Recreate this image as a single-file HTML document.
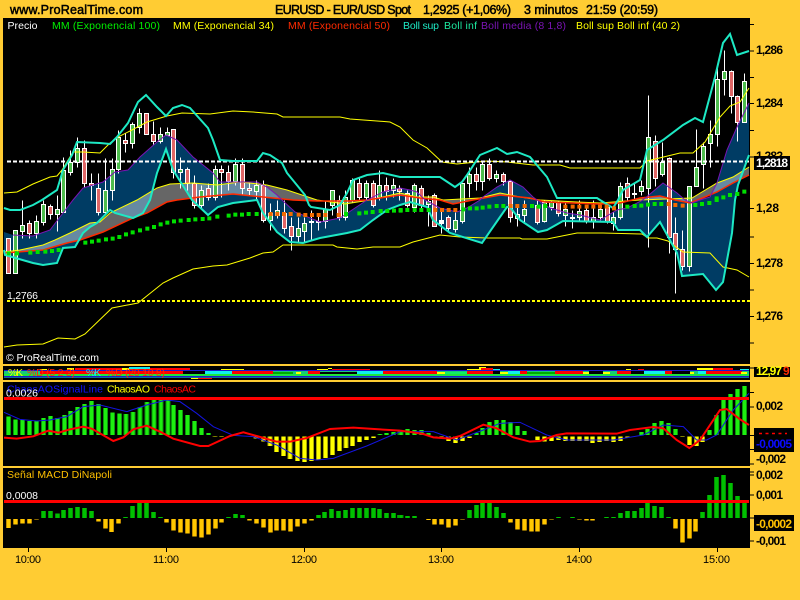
<!DOCTYPE html>
<html><head><meta charset="utf-8"><title>EURUSD</title>
<style>
html,body{margin:0;padding:0;background:#ffcc33;width:800px;height:600px;overflow:hidden}
svg{display:block;font-family:"Liberation Sans",sans-serif}
.t{font-size:12.5px;fill:#000;stroke:#000;stroke-width:.5}
.l{font-size:10.5px}
.a{font-size:12px;font-weight:bold;fill:#000}
.h{font-size:11px;fill:#000}
.n{fill:none}
</style></head><body>
<svg width="800" height="600" viewBox="0 0 800 600" xmlns="http://www.w3.org/2000/svg">
<defs>
<path id="ag" d="M25 225V170M46 225V178M67 225V180M88 225V183M109 225V183M130 225V174M151 225V168M172 225V174M193 225V165M212 225V153M233 225V141M254 225V132M275 225V123M296 225V132M317 225V144M338 225V158M359 225V160M378 225V162M399 225V156M420 225V141M441 225V126M462 225V120M483 225V120M504 225V120M520 225V135M541 225V150M562 225V165M583 225V183M604 225V204M625 225V219"/>
<path id="ay" d="M645 229V231M665 229V231M768 229V236M790 229V245M810 229V258M830 229V276M850 229V288M870 229V297M892 229V303M913 229V306M934 229V303M955 229V300M976 229V294M997 229V285M1018 229V273M1038 229V264M1058 229V258M1078 229V246M1100 229V240M1120 229V234"/>
<path id="ag3" d="M1140 225V222M1160 225V219M1180 225V216M1200 225V213"/>
<path id="bg" d="M3 225V216M22 225V207M43 225V210M64 225V210M85 225V219M229 225V219M247 225V204M268 225V186M289 225V180M310 225V180M331 225V186M352 225V198M373 225V213M724 225V216M743 225V207M763 225V189M784 225V183M805 225V189M826 225V207M929 225V210M950 225V165M971 225V120M992 225V102M1012 225V87M1033 225V78"/>
<path id="by" d="M105 229V231M125 229V231M145 229V243M166 229V249M187 229V243M208 229V234M412 229V240M433 229V245M454 229V243M475 229V240M496 229V243M517 229V243M538 229V243M559 229V243M578 229V249M599 229V246M620 229V243M640 229V246M661 229V243M682 229V233M847 229V231M868 229V255M889 229V258M908 229V246"/>
<path id="cg" d="M130 174V153M151 174V153M172 174V160M190 174V150M211 174V144M232 174V141M253 174V144M274 174V153M376 174V171M397 174V138M418 174V129M439 174V129M460 174V156M481 174V171M685 174V171M706 174V162M727 174V165M955 174V165M973 174V156M994 174V147M1015 174V153M1036 174V150M1057 174V144M1078 174V144M1099 174V144M1120 174V144M1138 174V147M1159 174V159M1180 174V159M1198 174V165"/>
<path id="co" d="M25 177V204M46 177V194M67 177V191M88 177V191M109 177V178M295 177V185M316 177V206M334 177V216M355 177V191M500 177V188M520 177V212M541 177V218M562 177V221M583 177V230M604 177V233M625 177V224M646 177V206M664 177V188M748 177V182M769 177V191M790 177V203M811 177V218M829 177V212M850 177V212M871 177V215M892 177V200M913 177V191M934 177V182"/>
<path id="dg" d="M3 174V165M22 174V168M43 174V168M208 174V150M229 174V135M247 174V129M268 174V129M289 174V141M310 174V159M475 174V171M517 174V171M619 174V171M640 174V171M661 174V159M682 174V153M703 174V153M724 174V144M743 174V129M764 174V138M785 174V141M806 174V171M908 174V156M929 174V105M950 174V51M971 174V45M992 174V69M1013 174V108M1034 174V129"/>
<path id="do" d="M85 177V180M103 177V194M124 177V194M145 177V203M166 177V197M187 177V178M331 177V188M352 177V209M373 177V212M394 177V215M412 177V215M433 177V194M454 177V178M538 177V179M559 177V181M577 177V181M827 177V206M848 177V248M869 177V236M887 177V215"/>
</defs>

<!-- panels -->
<rect x="3" y="18" width="747" height="346" fill="#000"/>
<rect x="3" y="366" width="747" height="14" fill="#000"/>
<rect x="3" y="382" width="747" height="84" fill="#000"/>
<rect x="3" y="468" width="747" height="80" fill="#000"/>

<!-- clouds -->
<polygon fill="#003c64" points="4,232 13,235 33,236 50,230 63,213 73,200 83,188 103,182 115,172 128,170 140,157 157,142 166,135 177,140 193,157 213,173 220,182 240,182 257,182 267,187 277,195 282,200 295,212 320,222 340,218 367,200 383,192 400,188 410,190 417,192 425,200 440,208 457,212 467,208 480,200 483,197 497,187 510,180 523,187 533,197 537,200 550,208 557,210 567,213 580,215 600,220 617,210 627,208 643,200 663,183 677,193 685,200 692,203 700,200 710,197 717,183 727,150 737,127 749,103 749,155 738,185 735,200 732,233 723,282 716,290 703,274 682,276 677,253 660,222 647,237 640,230 618,230 613,222 563,221 547,230 538,232 520,220 510,207 507,207 500,217 482,243 450,233 433,220 427,207 410,202 400,205 387,210 373,220 360,230 347,233 320,238 303,243 290,242 277,232 263,213 257,200 233,203 218,207 208,215 192,200 173,170 166,149 157,173 150,200 143,213 133,218 115,213 110,210 97,223 90,227 83,233 75,247 63,248 57,263 43,265 33,263 12,257 5,255 4,250"/>
<polygon fill="#666" style="mix-blend-mode:screen" points="4,252 20,250 43,245 55,240 70,233 90,223 100,222 110,213 137,200 157,188 170,184 193,183 217,185 240,182 267,185 287,190 317,200 345,204 370,200 400,193 417,197 433,197 443,200 480,198 500,193 520,197 540,200 577,202 600,203 640,200 692,198 717,183 733,177 749,167 749,175 733,183 717,192 700,199 690,203 675,200 660,196 640,198 620,203 600,204 545,202 530,198 500,195 473,200 453,204 440,200 420,198 400,195 367,200 347,201 317,201 293,200 263,197 233,194 200,197 177,200 167,202 147,213 133,218 103,232 80,240 67,243 43,250 4,253"/>

<!-- candles -->
<g transform="translate(.5,.5)" stroke-width="1">
<path class="n" stroke="#fff" d="M22 200V238M29 220V238M36 215V238M43 200V225M50 204V219M57 195V231M63 157V212M70 150V175M77 137V167M84 140V187M91 173V200M98 173V215M105 158V215M112 158V200M118 130V173M125 133V152M132 122V148M139 108V133M146 113V134M153 121V145M160 127V143M167 127V135M173 129V178M180 157V188M187 167V190M194 175V208M201 185V209M208 183V200M215 165V200M221 165V197M228 165V190M235 158V185M242 158V195M249 182V195M256 180V200M263 180V222M270 203V230M277 200V218M284 200V233M291 217V250M298 217V243M304 217V242M311 210V240M318 213V230M325 200V228M332 193V215M339 195V220M345 190V220M352 178V202M359 178V200M366 180V200M373 180V207M379 170V200M386 177V200M393 178V197M399 185V200M407 190V207M414 183V212M421 185V208M428 195V226M434 193V226M441 208V233M448 215V230M455 212V232M462 183V223M469 167V197M476 167V190M482 160V190M489 158V180M496 170V182M503 172V185M510 180V222M517 207V226M524 200V222M537 200V224M544 200V222M551 200V210M558 200V216M565 202V226M572 210V228M579 200V220M586 205V223M593 200V228M600 203V220M607 203V223M613 212V230M620 182V219M627 177V200M634 183V200M641 180V195M648 95V247M655 135V186M662 142V176M669 157V253M675 217V293M682 230V270M689 186V271M696 129V186M703 142V188M710 120V167M717 65V146M724 50V95M731 70V113M737 95V141M744 73V122"/>
<path fill="#e06666" stroke="#fff" d="M6 238h4V273h-4zM27 223h4V233h-4zM48 206h4V214h-4zM82 148h4V183h-4zM89 183h4V185h-4zM96 188h4V212h-4zM123 140h4V143h-4zM144 113h4V134h-4zM151 134h4V141h-4zM171 129h4V172h-4zM185 169h4V183h-4zM192 183h4V205h-4zM206 188h4V197h-4zM219 169h4V172h-4zM226 172h4V181h-4zM240 164h4V188h-4zM247 188h4V190h-4zM261 185h4V220h-4zM282 213h4V228h-4zM289 226h4V236h-4zM337 200h4V217h-4zM357 183h4V197h-4zM371 183h4V205h-4zM384 185h4V191h-4zM397 188h4V191h-4zM405 193h4V205h-4zM419 188h4V205h-4zM432 195h4V226h-4zM446 217h4V228h-4zM474 174h4V181h-4zM487 164h4V178h-4zM501 174h4V181h-4zM508 181h4V217h-4zM535 205h4V222h-4zM556 202h4V213h-4zM584 210h4V221h-4zM605 207h4V221h-4zM625 183h4V197h-4zM653 141h4V178h-4zM667 158h4V237h-4zM673 233h4V249h-4zM680 249h4V266h-4zM729 71h4V96h-4zM735 96h4V122h-4z"/>
<path fill="#4dbd4d" stroke="#fff" d="M13 230h4V273h-4zM20 225h4V231h-4zM34 221h4V233h-4zM41 204h4V222h-4zM55 209h4V214h-4zM61 170h4V212h-4zM68 162h4V172h-4zM75 148h4V162h-4zM103 190h4V212h-4zM110 169h4V190h-4zM116 137h4V169h-4zM130 124h4V143h-4zM137 113h4V127h-4zM158 134h4V141h-4zM165 132h4V135h-4zM178 169h4V172h-4zM199 190h4V205h-4zM213 169h4V197h-4zM233 164h4V181h-4zM254 185h4V191h-4zM268 213h4V220h-4zM275 210h4V215h-4zM296 228h4V236h-4zM302 223h4V231h-4zM323 209h4V221h-4zM330 190h4V205h-4zM343 197h4V217h-4zM350 180h4V200h-4zM364 183h4V197h-4zM377 185h4V197h-4zM391 185h4V190h-4zM412 185h4V207h-4zM426 201h4V204h-4zM453 220h4V229h-4zM460 183h4V221h-4zM467 174h4V183h-4zM480 164h4V181h-4zM494 174h4V178h-4zM515 214h4V218h-4zM522 209h4V215h-4zM542 202h4V221h-4zM549 202h4V207h-4zM563 209h4V215h-4zM577 211h4V217h-4zM591 217h4V221h-4zM598 209h4V217h-4zM611 217h4V223h-4zM618 186h4V217h-4zM639 186h4V191h-4zM646 137h4V188h-4zM660 162h4V174h-4zM687 186h4V266h-4zM694 167h4V186h-4zM701 146h4V164h-4zM708 134h4V143h-4zM715 79h4V134h-4zM722 71h4V79h-4zM742 81h4V122h-4z"/>
<path fill="#fff" stroke="#fff" d="M309 221h4v1h-4zM316 221h4v1h-4zM439 220h4V223h-4zM570 217h4v1h-4zM632 193h4v1h-4z"/>
</g>

<!-- moving averages -->
<polyline class="n" stroke="#ff0" points="4,252 20,250 43,245 55,240 70,233 90,223 100,222 110,213 137,200 157,188 170,184 193,183 217,185 240,182 267,185 287,190 317,200 345,204 370,200 400,193 417,197 433,197 443,200 480,198 500,193 520,197 540,200 577,202 600,203 640,200 692,198 717,183 733,177 749,167"/>
<polyline class="n" stroke="#ff2a00" stroke-width="1.5" points="4,253 43,250 67,243 80,240 103,232 133,218 147,213 167,202 177,200 200,197 233,194 263,197 293,200 317,201 347,201 367,200 400,195 420,198 440,200 453,204 473,200 500,195 530,198 545,202 600,204 620,203 640,198 660,196 675,200 690,203 700,199 717,192 733,183 749,175"/>
<polyline class="n" stroke="#7a14b4" points="13,235 33,236 50,230 63,213 73,200 83,188 103,182 115,172 128,170 140,157 157,142 166,135 177,140 193,157 213,173 220,182 240,182 257,182 267,187 277,195 282,200 295,212 320,222 340,218 367,200 383,192 400,188 410,190 417,192 425,200 440,208 457,212 467,208 480,200 483,197 497,187 510,180 523,187 533,197 537,200 550,208 557,210 567,213 580,215 600,220 617,210 627,208 643,200 663,183 677,193 685,200 692,203 700,200 710,197 717,183 727,150 737,127 749,103"/>
<polyline class="n" stroke="#ff0" points="4,193 17,192 33,184 50,177 57,176 62,170 73,152 83,152 100,153 110,143 118,137 130,131 147,122 167,116 182,113 210,114 233,111 253,112 277,114 283,117 340,117 350,119 377,121 390,122 400,127 413,140 427,148 442,162 457,164 487,161 507,162 533,165 560,165 570,168 640,168 647,161 680,153 693,153 705,142 720,117 730,106 740,102 749,88"/>
<polyline class="n" stroke="#ff0" points="4,347 17,345 43,344 58,338 75,339 85,334 112,308 138,303 163,283 173,278 193,269 213,266 227,265 250,258 263,253 273,252 283,245 333,245 337,247 357,249 373,247 400,247 413,242 440,235 460,237 487,238 520,238 522,239 547,239 577,233 603,233 642,234 648,238 657,238 668,241 683,252 710,253 723,267 737,270 749,277"/>
<path stroke="#fff" stroke-width="2" stroke-dasharray="4 2" d="M7 161.5H750"/>
<path stroke="#ff0" stroke-width="2" stroke-dasharray="3 2" d="M7 301H750"/>
<polyline class="n" stroke="#1de9c4" stroke-width="2" points="4,208 10,210 20,210 33,205 42,200 57,190 63,170 72,155 77,142 100,143 110,144 117,137 128,123 138,102 146,95 157,107 166,116 173,108 182,105 190,108 208,128 213,140 220,160 233,161 257,161 263,153 270,155 282,163 287,173 305,195 309,205 311,207 330,210 340,205 347,193 353,180 367,175 383,173 400,177 417,177 440,177 455,187 462,182 467,175 480,155 497,148 507,154 517,152 530,157 547,177 557,198 597,198 600,200 613,208 618,200 623,190 640,180 647,150 663,140 683,125 695,118 703,122 715,77 723,43 730,34 737,55 749,51"/>
<polyline class="n" stroke="#1de9c4" stroke-width="2" points="4,250 5,255 12,257 33,263 43,265 57,263 63,248 75,247 83,233 90,227 97,223 110,210 115,213 133,218 143,213 150,200 157,173 166,149 173,170 192,200 208,215 218,207 233,203 257,200 263,213 277,232 290,242 303,243 320,238 347,233 360,230 373,220 387,210 400,205 410,202 427,207 433,220 450,233 482,243 500,217 507,207 510,207 520,220 538,232 547,230 563,221 613,222 618,230 640,230 647,237 660,222 677,253 682,276 703,274 716,290 723,282 732,233 735,200 738,185 749,155"/>

<!-- dots -->
<g transform="translate(0,200) scale(.33333)" stroke-width="12" fill="none">
<path stroke="#00e000" d="M20 160h12M45 160h12M85 158h12M107 156h12M130 155h12M150 153h12M170 150h12M250 128h12M270 125h12M290 122h12M312 118h12M332 116h12M352 111h12M372 103h12M392 97h12M414 91h12M436 86h12M456 81h12M476 73h12M496 68h12M516 64h12M536 62h12M560 60h12M580 58h12M602 57h12M622 55h12M646 50h12M680 47h12M700 44h12M720 44h12M740 42h12M764 42h12M1032 42h12M1072 40h12M1092 38h12M1112 36h12M1136 33h12M1156 33h12M1176 32h12M1196 32h12"/>
<path stroke="#f26a00" d="M806 42h12M826 42h12M846 42h12M866 42h12M890 44h12M910 45h12M930 45h12M950 45h12M970 45h12M1010 45h12"/>
</g>
<g transform="translate(400,200) scale(.33333)" stroke-width="12" fill="none">
<path stroke="#00e000" d="M-4 30h12M16 30h12M38 30h12M58 30h12M80 30h12M184 28h12M204 25h12M224 25h12M242 23h12M262 20h12M284 18h12M304 18h12M390 18h12M410 20h12M430 18h12M676 20h12M698 18h12M718 17h12M738 14h12M758 12h12M778 12h12M880 15h12M900 12h12M922 9h12M944 0h12"/>
<path stroke="#f26a00" d="M100 30h12M120 30h12M140 30h12M160 30h12M326 18h12M346 18h12M368 18h12M490 20h12M512 20h12M532 20h12M554 20h12M574 20h12M594 20h12M614 20h12M636 25h12M800 12h12M820 15h12M842 17h12"/>
</g>
<g transform="translate(400,0) scale(.33333)" stroke-width="12" fill="none">
<path stroke="#00e000" d="M944 595h12M964 592h12M984 585h12M1006 582h12M1027 575h12"/>
</g>

<!-- stochastic strip -->
<g shape-rendering="crispEdges">
<rect x="75" y="368" width="115" height="2" fill="#f00"/><rect x="40" y="369" width="7" height="1" fill="#ff0"/><rect x="67" y="368" width="7" height="2" fill="#ff0"/><rect x="122" y="368" width="7" height="2" fill="#ff0"/><rect x="129" y="367" width="21" height="2" fill="#1ee"/><rect x="221" y="369" width="23" height="1" fill="#ff0"/>
<rect x="317" y="369" width="11" height="1" fill="#ff0"/><rect x="328" y="368" width="4" height="1" fill="#ff0"/><rect x="332" y="369" width="38" height="1" fill="#f00"/><rect x="467" y="369" width="14" height="1" fill="#ff0"/><rect x="479" y="367" width="7" height="2" fill="#ff0"/><rect x="481" y="368" width="12" height="2" fill="#f00"/><rect x="493" y="369" width="7" height="1" fill="#1ee"/>
<rect x="626" y="369" width="5" height="1" fill="#ff0"/><rect x="638" y="369" width="6" height="1" fill="#f00"/><rect x="697" y="368" width="16" height="2" fill="#ff0"/><rect x="713" y="368" width="20" height="2" fill="#f00"/><rect x="740" y="369" width="9" height="1" fill="#1ee"/>
<rect x="4" y="370" width="745" height="1" fill="#1a1acc"/>
<rect x="4" y="371" width="745" height="3" fill="#18c87a"/>
<rect x="40" y="371" width="143" height="3" fill="#f00"/><rect x="183" y="371" width="22" height="3" fill="#000"/><rect x="205" y="371" width="27" height="3" fill="#1ee"/><rect x="232" y="371" width="41" height="3" fill="#f00"/><rect x="273" y="372" width="20" height="2" fill="#0a0"/><rect x="296" y="372" width="5" height="2" fill="#ff0"/><rect x="308" y="371" width="12" height="3" fill="#f00"/><rect x="320" y="372" width="37" height="2" fill="#000"/><rect x="357" y="371" width="26" height="3" fill="#1ee"/><rect x="383" y="371" width="54" height="3" fill="#f00"/><rect x="437" y="372" width="8" height="2" fill="#ff0"/><rect x="445" y="372" width="22" height="2" fill="#1e6"/><rect x="467" y="371" width="26" height="3" fill="#f00"/><rect x="493" y="371" width="7" height="3" fill="#000"/><rect x="500" y="372" width="8" height="2" fill="#ff0"/><rect x="508" y="371" width="12" height="3" fill="#1ee"/>
<rect x="520" y="371" width="7" height="3" fill="#f00"/><rect x="527" y="372" width="28" height="2" fill="#0a0"/><rect x="555" y="371" width="28" height="3" fill="#f00"/><rect x="583" y="372" width="6" height="2" fill="#ff0"/><rect x="589" y="371" width="14" height="3" fill="#000"/><rect x="603" y="372" width="7" height="2" fill="#ff0"/><rect x="617" y="371" width="14" height="3" fill="#f00"/><rect x="631" y="371" width="13" height="3" fill="#000"/><rect x="644" y="371" width="21" height="3" fill="#1ee"/><rect x="665" y="371" width="7" height="3" fill="#f00"/><rect x="672" y="371" width="18" height="3" fill="#000"/><rect x="690" y="372" width="4" height="2" fill="#ff0"/><rect x="698" y="371" width="8" height="3" fill="#1ee"/><rect x="706" y="371" width="21" height="3" fill="#f00"/><rect x="727" y="371" width="15" height="3" fill="#f00"/><rect x="741" y="372" width="6" height="2" fill="#ff0"/>
<rect x="4" y="374" width="745" height="2" fill="#1ee63c"/>
<rect x="4" y="376" width="745" height="1" fill="#1a1acc"/>
<rect x="4" y="377" width="745" height="1" fill="#0a6a9a"/>
<rect x="191" y="378" width="7" height="1" fill="#ff0"/><rect x="198" y="378" width="14" height="1" fill="#f00"/>
</g>
<text class="l" x="8" y="376" textLength="15" fill="#ff0">%K</text>
<text class="l" x="27" y="376" textLength="48" fill="#ff2a00">%D (5 2 3)</text>
<text class="l" x="86" y="376" textLength="15" fill="#1ee">%K</text>
<text class="l" x="106" y="376" textLength="59" fill="#ff2a00">%D (20 10 8)</text>

<!-- AO panel -->
<g transform="translate(0,360) scale(.33333)" fill="none" shape-rendering="crispEdges">
<use href="#ag" stroke="#0a9a0a" stroke-width="15"/><use href="#ag" stroke="#1eee10" stroke-width="9"/>
<use href="#ag3" stroke="#0a9a0a" stroke-width="15"/><use href="#ag3" stroke="#1eee10" stroke-width="9"/>
<use href="#ay" stroke="#a8a800" stroke-width="15"/><use href="#ay" stroke="#ff0" stroke-width="9"/>
</g>
<g transform="translate(400,360) scale(.33333)" fill="none" shape-rendering="crispEdges">
<use href="#bg" stroke="#0a9a0a" stroke-width="15"/><use href="#bg" stroke="#1eee10" stroke-width="9"/>
<use href="#by" stroke="#a8a800" stroke-width="15"/><use href="#by" stroke="#ff0" stroke-width="9"/>
</g>
<g transform="translate(0,360) scale(.33333)" fill="none">
<polyline stroke="#1414e0" stroke-width="3" points="12,157 60,178 110,183 150,180 200,170 250,140 300,135 380,155 440,135 500,120 540,125 590,160 640,200 700,226 760,230 830,255 900,295 950,300 1000,295 1100,258 1170,228 1200,215"/>
<polyline stroke="#f00" stroke-width="6" points="12,233 50,236 100,229 145,212 175,218 210,208 250,200 275,206 300,220 340,243 370,232 400,208 440,197 480,215 520,236 600,258 625,258 690,228 730,217 770,228 830,245 870,245 920,234 990,207 1060,203 1200,212"/>
</g>
<g transform="translate(400,360) scale(.33333)" fill="none">
<polyline stroke="#1414e0" stroke-width="3" points="0,215 100,215 170,240 250,210 300,190 360,187 440,225 500,240 640,240 730,225 790,195 850,200 890,240 920,240 950,225 1000,150 1047,100"/>
<polyline stroke="#f00" stroke-width="6" points="0,212 40,217 70,222 100,232 150,236 180,228 250,194 290,205 340,232 390,245 420,243 470,225 500,220 650,221 690,210 760,201 790,205 830,240 868,264 900,240 960,150 980,147 1020,178 1047,195"/>
</g>
<text class="l" x="7" y="392.5" textLength="96" fill="#1212ff">ChaosAOSignalLine</text>
<text class="l" x="107" y="392.5" textLength="43" fill="#ff0">ChaosAO</text>
<text class="l" x="154" y="392.5" textLength="42" fill="#f00">ChaosAC</text>
<text class="l" x="6" y="396.5" textLength="32" fill="#fff">0,0026</text>
<rect x="4" y="397" width="745" height="3" fill="#f00"/>

<!-- DiNapoli panel -->
<g transform="translate(0,460) scale(.33333)" fill="none" shape-rendering="crispEdges">
<use href="#cg" stroke="#009000" stroke-width="15"/><use href="#cg" stroke="#00c000" stroke-width="9"/>
<use href="#co" stroke="#c08a00" stroke-width="15"/><use href="#co" stroke="#ffc800" stroke-width="9"/>
</g>
<g transform="translate(400,460) scale(.33333)" fill="none" shape-rendering="crispEdges">
<use href="#dg" stroke="#009000" stroke-width="15"/><use href="#dg" stroke="#00c000" stroke-width="9"/>
<use href="#do" stroke="#c08a00" stroke-width="15"/><use href="#do" stroke="#ffc800" stroke-width="9"/>
</g>
<text class="l" x="7" y="478" textLength="105" fill="#ffc000">Señal MACD DiNapoli</text>
<text class="l" x="6" y="499" textLength="32" fill="#fff">0,0008</text>
<rect x="4" y="500" width="745" height="3" fill="#f00"/>

<!-- main legend -->
<text class="l" x="7.5" y="29" textLength="30" fill="#fff">Precio</text>
<text class="l" x="52" y="29" textLength="108" fill="#00f000">MM (Exponencial 100)</text>
<text class="l" x="173" y="29" textLength="101" fill="#ff0">MM (Exponencial 34)</text>
<text class="l" x="288" y="29" textLength="102" fill="#ff2a00">MM (Exponencial 50)</text>
<text class="l" x="403" y="29" textLength="36" fill="#1de9c4">Boll sup</text>
<text class="l" x="444" y="29" textLength="33" fill="#1de9a0">Boll inf</text>
<text class="l" x="481" y="29" textLength="85" fill="#7a14b4">Boll media (8 1,8)</text>
<text class="l" x="576" y="29" textLength="104" fill="#ff0">Boll sup Boll inf (40 2)</text>
<text class="l" x="7" y="299" textLength="31" fill="#fff">1,2766</text>
<text x="6" y="361" font-size="10.5" textLength="93" fill="#fff">© ProRealTime.com</text>

<!-- header -->
<text class="t" x="10" y="14" textLength="133">www.ProRealTime.com</text>
<text class="t" x="275" y="14" textLength="136">EURUSD - EUR/USD Spot</text>
<text class="t" x="423" y="14" textLength="88">1,2925 (+1,06%)</text>
<text class="t" x="524" y="14" textLength="54">3 minutos</text>
<text class="t" x="586" y="14" textLength="72">21:59 (20:59)</text>

<!-- axis ticks -->
<path stroke="#000" fill="none" d="M750 24.5h4M750 51h4M750 77.5h4M750 103.5h4M750 130.5h4M750 157h4M750 208.5h4M750 237h4M750 263.5h4M750 290h4M750 316.5h4M750 343h4M750 368h4M750 392.5h4M750 407h4M750 435.5h4M750 449.5h4M750 464h4M750 472h4M750 475h4M750 495h4M750 518h4M750 541h4M28.5 548v4M166.5 548v4M304.5 548v4M441.5 548v4M579.5 548v4M717.5 548v4"/>

<!-- price axis -->
<text class="a" x="756" y="54" textLength="27">1,286</text>
<text class="a" x="756" y="107" textLength="27">1,284</text>
<text class="a" x="756" y="160" textLength="27">1,282</text>
<text class="a" x="756" y="212" textLength="23">1,28</text>
<text class="a" x="756" y="267" textLength="27">1,278</text>
<text class="a" x="756" y="320" textLength="27">1,276</text>
<rect x="754" y="156" width="36" height="14" fill="#000"/>
<text class="a" x="756" y="167" textLength="32" style="fill:#fff">1,2818</text>
<rect x="754" y="367" width="36" height="10" fill="#000"/>
<text class="a" x="756" y="375" textLength="26" style="fill:#ff0">12,97</text>
<text class="a" x="783" y="375" style="fill:#ff2a00">9</text>
<text class="a" x="756" y="410" textLength="27">0,002</text>
<rect x="754" y="428" width="40" height="24" fill="#000"/>
<path stroke="#f00" stroke-width="1.5" stroke-dasharray="3 3.5" d="M759 433.5H787"/>
<text class="a" x="756" y="448" textLength="36" style="fill:#0a0aff">-0,0005</text>
<text class="a" x="756" y="463" textLength="30">-0,002</text>
<text class="a" x="756" y="479" textLength="27">0,002</text>
<text class="a" x="756" y="499" textLength="27">0,001</text>
<rect x="754" y="515" width="40" height="16" fill="#000"/>
<text class="a" x="756" y="528" textLength="36" style="fill:#ffc000">-0,0002</text>
<text class="a" x="756" y="545" textLength="30">-0,001</text>

<!-- time axis -->
<text class="h" x="15" y="563" textLength="26">10:00</text>
<text class="h" x="153" y="563" textLength="26">11:00</text>
<text class="h" x="291" y="563" textLength="26">12:00</text>
<text class="h" x="428" y="563" textLength="26">13:00</text>
<text class="h" x="566" y="563" textLength="26">14:00</text>
<text class="h" x="703" y="563" textLength="27">15:00</text>
</svg>
</body></html>
